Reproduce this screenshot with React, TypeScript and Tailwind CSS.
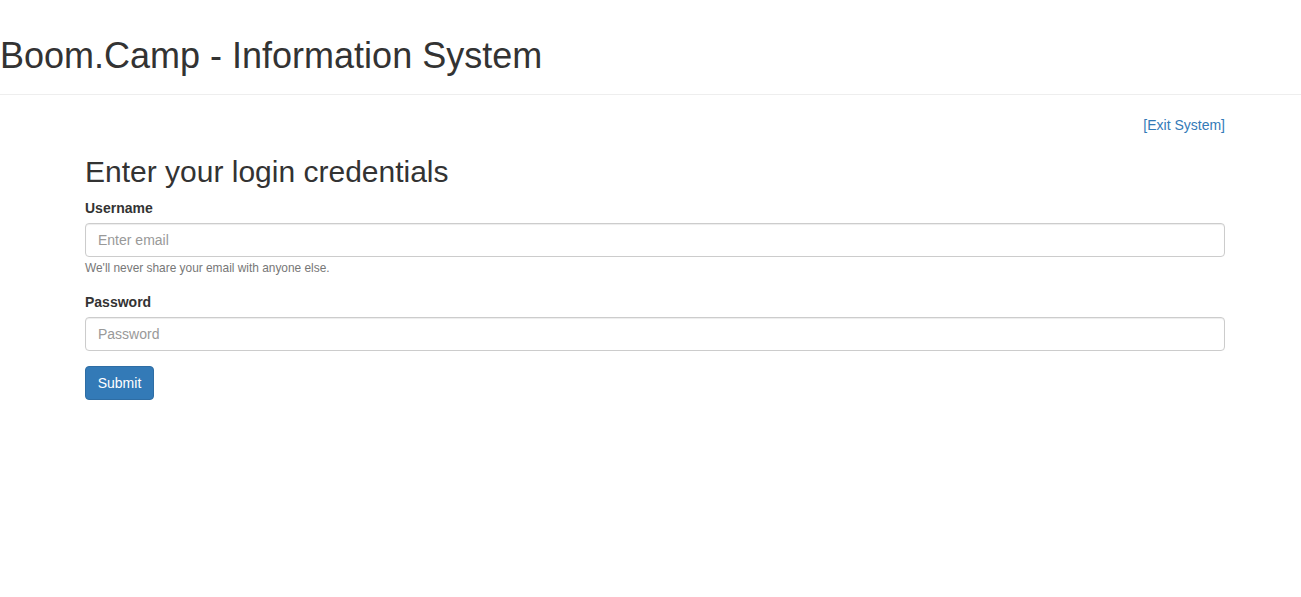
import React from "react";

export default function App() {
  return (
    <div className="min-h-[597px] bg-white text-[#333] text-[14px] leading-[20px]" style={{ fontFamily: '"Liberation Sans", Arial, Helvetica, sans-serif' }}>
      <div className="pt-[36px] pb-[18px] border-b border-[#eee]">
        <h1 className="m-0 text-[36px] leading-[39.6px] font-normal">Boom.Camp - Information System</h1>
      </div>
      <div className="ml-[85px] w-[1140px] pt-[20px]">
        <div className="flex justify-end">
          <a href="#" className="text-[#337ab7]">[Exit System]</a>
        </div>
        <h2 className="mt-[20px] mb-[10px] text-[30px] leading-[33px] font-normal">Enter your login credentials</h2>
        <form onSubmit={(e) => e.preventDefault()}>
          <div className="mb-[15px]">
            <label className="block mb-[5px] font-bold">Username</label>
            <input
              type="email"
              placeholder="Enter email"
              className="block w-full h-[34px] px-[12px] py-[6px] text-[14px] text-[#555] bg-white border border-[#ccc] rounded-[4px] shadow-[inset_0_1px_1px_rgba(0,0,0,0.075)] placeholder:text-[#999] outline-none"
            />
            <small className="block h-[20px] pt-[1px] text-[11.9px] leading-[20px] text-[#777]">We'll never share your email with anyone else.</small>
          </div>
          <div className="mb-[15px]">
            <label className="block mb-[5px] font-bold">Password</label>
            <input
              type="password"
              placeholder="Password"
              className="block w-full h-[34px] px-[12px] py-[6px] text-[14px] text-[#555] bg-white border border-[#ccc] rounded-[4px] shadow-[inset_0_1px_1px_rgba(0,0,0,0.075)] placeholder:text-[#999] outline-none"
            />
          </div>
          <button
            type="submit"
            className="w-[69px] h-[34px] text-[14px] leading-[20px] text-white bg-[#337ab7] border border-[#2e6da4] rounded-[4px]"
          >
            Submit
          </button>
        </form>
      </div>
    </div>
  );
}
